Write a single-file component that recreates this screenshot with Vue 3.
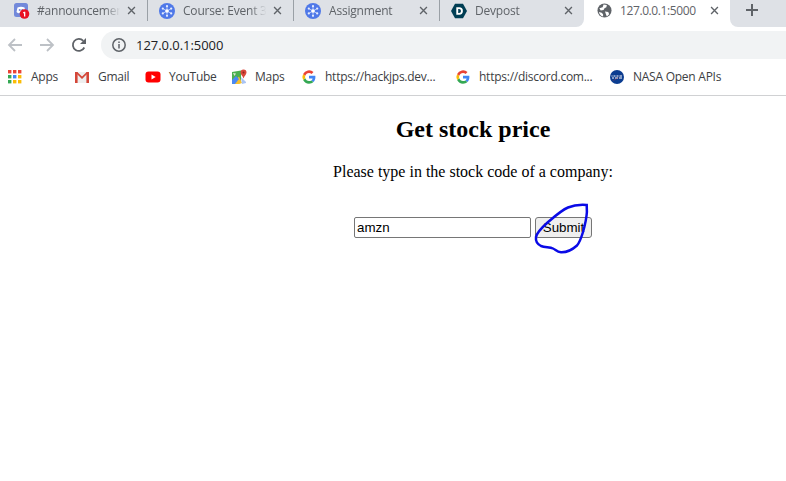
<script setup>
const tabs = [
  { title: '#announcemen', icon: 'discord' },
  { title: 'Course: Event 3', icon: 'hub' },
  { title: 'Assignment', icon: 'hub' },
  { title: 'Devpost', icon: 'devpost' },
]

const bookmarks = [
  { label: 'Apps', icon: 'apps', width: 27 },
  { label: 'Gmail', icon: 'gmail', width: 31 },
  { label: 'YouTube', icon: 'youtube', width: 46 },
  { label: 'Maps', icon: 'maps', width: 30 },
  { label: 'https://hackjps.dev...', icon: 'google', width: 114 },
  { label: 'https://discord.com...', icon: 'google', width: 114 },
  { label: 'NASA Open APIs', icon: 'nasa', width: 90 },
]

const spokes = [
  [8, 3.2], [12.2, 5.6], [12.2, 10.4], [8, 12.8], [3.8, 10.4], [3.8, 5.6],
]
</script>

<template>
  <div class="window">
    <div class="tabstrip">
      <div class="tabs">
        <div v-for="tab in tabs" :key="tab.title" class="tab">
          <svg v-if="tab.icon === 'discord'" class="favicon" viewBox="0 0 16 16">
            <rect x="0" y="0" width="14" height="14" rx="2.5" fill="#7289da" />
            <path d="M3.5 4.5Q7 2.8 10.500 4.500L11.500 9Q10 10.500 8.800 10.300L8.300 9.400Q7 9.800 5.700 9.400L5.200 10.300Q4 10.500 2.500 9Z" fill="#fff" />
            <circle cx="5.700" cy="7" r="1" fill="#7289da" />
            <circle cx="8.300" cy="7" r="1" fill="#7289da" />
            <circle cx="10.500" cy="11" r="4.800" fill="#e81123" />
            <path d="M10 8.800h1.300v4.600h-1.300v-3.300l-1 .4v-1Z" fill="#fff" />
          </svg>
          <svg v-else-if="tab.icon === 'hub'" class="favicon" viewBox="0 0 16 16">
            <circle cx="8" cy="8" r="8" fill="#4f78e8" />
            <line v-for="(s, i) in spokes" :key="i" x1="8" y1="8" :x2="s[0]" :y2="s[1]" stroke="#cfdcfb" stroke-width="0.8" />
            <circle v-for="(s, i) in spokes" :key="'n' + i" :cx="s[0]" :cy="s[1]" r="1.100" fill="#e6edfe" />
            <circle cx="8" cy="8" r="1.800" fill="#fff" />
          </svg>
          <svg v-else class="favicon" viewBox="0 0 16 16">
            <path d="M4 .8h8L16 8l-4 7.200H4L0 8Z" fill="#003e54" />
            <path d="M5.300 4.300h2.900a3.700 3.700 0 0 1 0 7.400H5.300Zm1.900 1.800v3.800h.9a1.900 1.900 0 0 0 0-3.800Z" fill="#fff" fill-rule="evenodd" />
          </svg>
          <span class="tab-title">{{ tab.title }}</span>
          <svg class="tab-close" viewBox="0 0 10 10">
            <path d="M1.200 1.200l7.600 7.600M8.800 1.200l-7.600 7.600" />
          </svg>
        </div>
      </div>
      <div class="tab active">
        <svg class="favicon globe" viewBox="0 0 16 16">
          <circle cx="8" cy="8" r="7.500" fill="#5f6368" />
          <path d="M2.500 5.500L6 4.500l1-3 3.500.5-.5 2.500L8 5.500 7 7.500l-3 .5ZM8.500 9l3.500.5 1 2.500-2.500 2.500-1-2.500ZM2 9.500l3 1 1.500 1.500v2.500Q3 13.500 2 9.500Z" fill="#fff" />
        </svg>
        <span class="tab-title plain">127.0.0.1:5000</span>
        <svg class="tab-close" viewBox="0 0 10 10">
          <path d="M1.200 1.200l7.600 7.600M8.800 1.200l-7.600 7.600" />
        </svg>
      </div>
      <div class="newtab">
        <svg class="plus" viewBox="0 0 12 12">
          <path d="M6 0v12M0 6h12" />
        </svg>
      </div>
    </div>

    <div class="toolbar">
      <svg class="nav" viewBox="0 0 16 16">
        <path class="off" d="M15 8H2M8 2L2 8l6 6" />
      </svg>
      <svg class="nav" viewBox="0 0 16 16">
        <path class="off" d="M1 8h13M8 2l6 6-6 6" />
      </svg>
      <svg class="nav" viewBox="0 0 16 16">
        <path class="on" d="M13.300 10.500A6 6 0 1 1 12.300 3.800" />
        <path class="on-fill" d="M15 1v6H9Z" />
      </svg>
      <div class="omnibox">
        <svg class="info" viewBox="0 0 14 14">
          <circle cx="7" cy="7" r="6.200" />
          <path d="M7 6v4.500M7 3.500v1.500" />
        </svg>
        <span class="url">127.0.0.1:5000</span>
      </div>
    </div>

    <div class="bookmarks">
      <div v-for="b in bookmarks" :key="b.label" class="bookmark">
        <svg v-if="b.icon === 'apps'" class="favicon" viewBox="0 0 16 16">
          <rect x="1" y="1" width="3.400" height="3.400" fill="#ea4335" />
          <rect x="6" y="1" width="3.400" height="3.400" fill="#ea4335" />
          <rect x="11" y="1" width="3.400" height="3.400" fill="#ea4335" />
          <rect x="1" y="6" width="3.400" height="3.400" fill="#34a853" />
          <rect x="6" y="6" width="3.400" height="3.400" fill="#4285f4" />
          <rect x="11" y="6" width="3.400" height="3.400" fill="#fbbc05" />
          <rect x="1" y="11" width="3.400" height="3.400" fill="#34a853" />
          <rect x="6" y="11" width="3.400" height="3.400" fill="#fbbc05" />
          <rect x="11" y="11" width="3.400" height="3.400" fill="#fbbc05" />
        </svg>
        <svg v-else-if="b.icon === 'gmail'" class="favicon" viewBox="0 0 16 16">
          <path d="M1 3h14v11H1Z" fill="#eeeeee" />
          <path d="M1 3h2.600v11H1ZM12.400 3H15v11h-2.600Z" fill="#d44638" />
          <path d="M1 3h2.200L8 7.400 12.800 3H15L8 10Z" fill="#d44638" />
        </svg>
        <svg v-else-if="b.icon === 'youtube'" class="favicon" viewBox="0 0 16 16">
          <rect x="0.500" y="2.500" width="15" height="11" rx="3" fill="#f00" />
          <path d="M6.500 5.500L10.700 8l-4.200 2.500Z" fill="#fff" />
        </svg>
        <svg v-else-if="b.icon === 'maps'" class="favicon" viewBox="0 0 16 16">
          <path d="M1 3l9-1.500V14l-9 1Z" fill="#4caf50" />
          <path d="M1 15L8 7.500 11 14l-3 1Z" fill="#f6c02f" />
          <path d="M1 11L5 7l3 3-4 5H1Z" fill="#4a89f3" />
          <path d="M2 4l3 .5L3.500 7Z" fill="#d9ead3" />
          <path d="M10 8l5 5v1l-4 1Z" fill="#a9c4f5" />
          <path d="M12.500 .5a3 3 0 0 1 3 3c0 2-2 3-3 6-1-3-3-4-3-6a3 3 0 0 1 3-3Z" fill="#d9483b" />
          <circle cx="12.500" cy="3.500" r="1" fill="#8f2a20" />
        </svg>
        <svg v-else-if="b.icon === 'google'" class="favicon" viewBox="0 0 16 16">
          <path d="M14.400 8.200c0-.5 0-1-.1-1.400H8v2.700h3.600a3.100 3.100 0 0 1-1.300 2l2.100 1.600c1.200-1.200 2-2.900 2-4.900Z" fill="#4285f4" />
          <path d="M8 14.700c1.800 0 3.300-.6 4.400-1.600l-2.100-1.600c-.6.400-1.400.6-2.300.6-1.800 0-3.200-1.200-3.700-2.800l-2.200 1.700A6.700 6.700 0 0 0 8 14.700Z" fill="#34a853" />
          <path d="M4.300 9.300a4 4 0 0 1 0-2.600L2.100 5a6.700 6.700 0 0 0 0 6Z" fill="#fbbc05" />
          <path d="M8 3.900c1 0 1.900.4 2.600 1l1.900-1.900A6.700 6.700 0 0 0 2.100 5l2.200 1.700C4.800 5.100 6.200 3.900 8 3.900Z" fill="#ea4335" />
        </svg>
        <svg v-else class="favicon" viewBox="0 0 16 16">
          <circle cx="8" cy="8" r="7" fill="#0b3d91" />
          <path d="M2.500 7h1M4.500 7h2M7.500 7h2M10.500 7h2.500M3 9h2M6 9h3M10 9h3" stroke="#fff" stroke-width="1.200" />
          <path d="M2.500 12.500Q9 10 15.500 2.500Q11 8 6 10.500Z" fill="#e03c31" />
        </svg>
        <span class="bookmark-label" :style="{ width: b.width + 'px' }">{{ b.label }}</span>
      </div>
    </div>

    <main class="page">
      <h1>Get stock price</h1>
      <p>Please type in the stock code of a company:</p>
      <form class="stock-form" @submit.prevent>
        <input class="stock-input" type="text" value="amzn" />
        <button class="stock-submit" type="submit">Submit</button>
      </form>
    </main>

    <svg class="scribble" viewBox="0 0 786 481">
      <path d="M586.700 205C580 204.500 574 205 568 207.500C561 210.500 554 217 547 223C542 227.500 537 232 536 237C535.500 241 537 244 541 246C545 247.500 550 247 553 248.500C556 250 557 252 561 252.300C566 252.500 572 250 577 245.500C580 242 581.500 237 583 232C585 225 586.500 218 586.900 212Z" />
    </svg>
  </div>
</template>

<style scoped>
.window {
  position: relative;
  width: 786px;
  height: 481px;
  overflow: hidden;
  background: #fff;
}

.tabstrip {
  display: flex;
  height: 31px;
  background: #fff;
  font-family: "Open Sans", sans-serif;
  font-size: 12px;
}

.tabs {
  display: flex;
  width: 584px;
  height: 27px;
  padding-left: 1px;
  box-sizing: border-box;
  background: #dee1e6;
  border-bottom-right-radius: 8px;
}

.tab {
  position: relative;
  display: flex;
  align-items: center;
  flex: none;
  box-sizing: border-box;
  width: 146px;
  height: 21px;
  padding: 0 11px 0 12px;
}

.tabs .tab:first-child {
  padding-left: 13px;
}

.tabs .tab:first-child .tab-title {
  margin-left: 7px;
}

.tabs .tab:nth-child(4) {
  width: 145px;
}

.tabs .tab:not(:last-child)::after {
  content: "";
  position: absolute;
  right: -1px;
  top: 0;
  width: 1px;
  height: 21px;
  background: #9aa0a6;
}

.tab.active {
  padding-left: 13px;
}

.favicon {
  flex: none;
  width: 16px;
  height: 16px;
}

.globe {
  width: 15px;
  height: 15px;
}

.tab-title {
  flex: 1;
  min-width: 0;
  margin-left: 8px;
  overflow: hidden;
  white-space: nowrap;
  color: #5f6368;
  letter-spacing: -0.2px;
  -webkit-mask-image: linear-gradient(to right, #000 78%, transparent 97%);
  mask-image: linear-gradient(to right, #000 78%, transparent 97%);
}

.tab-title.plain {
  letter-spacing: -0.4px;
  -webkit-mask-image: none;
  mask-image: none;
}

.tab-close {
  flex: none;
  width: 9px;
  height: 9px;
  margin-left: 4px;
  fill: none;
  stroke: #5f6368;
  stroke-width: 1.500;
}

.newtab {
  flex: 1;
  height: 27px;
  background: #dee1e6;
  border-bottom-left-radius: 8px;
}

.plus {
  display: block;
  width: 12px;
  height: 12px;
  margin: 4px 0 0 16px;
  fill: none;
  stroke: #5f6368;
  stroke-width: 2;
}

.toolbar {
  display: flex;
  align-items: center;
  gap: 16px;
  height: 28px;
  padding-left: 7px;
  margin-bottom: 3px;
}

.nav {
  flex: none;
  width: 16px;
  height: 16px;
  fill: none;
}

.off {
  stroke: #bdc1c6;
  stroke-width: 1.800;
}

.on {
  fill: none;
  stroke: #5f6368;
  stroke-width: 1.800;
}

.on-fill {
  fill: #5f6368;
}

.omnibox {
  display: flex;
  flex: 1;
  align-items: center;
  gap: 10px;
  height: 28px;
  margin-left: -2px;
  padding-left: 11px;
  background: #f1f3f4;
  border-radius: 14px 0 0 14px;
}

.info {
  flex: none;
  width: 14px;
  height: 14px;
  fill: none;
  stroke: #5f6368;
  stroke-width: 1.500;
}

.url {
  font-family: "Open Sans", sans-serif;
  font-size: 13px;
  letter-spacing: -0.05px;
  color: #202124;
}

.bookmarks {
  display: flex;
  align-items: center;
  gap: 16px;
  height: 34px;
  padding: 0 0 3px 7px;
  box-sizing: border-box;
  border-bottom: 1px solid #d0d1d3;
  font-family: "Open Sans", sans-serif;
  font-size: 12px;
  letter-spacing: -0.25px;
  color: #3c4043;
}

.bookmark {
  display: flex;
  align-items: center;
  gap: 8px;
}

.bookmark-label {
  position: relative;
  top: -1px;
  white-space: nowrap;
}

.page {
  width: 946px;
  text-align: center;
  font-family: "Liberation Serif", serif;
  font-size: 16px;
  color: #000;
}

h1 {
  margin: 20px 0;
  font-size: 24px;
  font-weight: bold;
  line-height: 27px;
}

p {
  margin: 0 0 36px;
  line-height: 18px;
}

.stock-form {
  display: flex;
  justify-content: center;
  gap: 4px;
}

.stock-input {
  box-sizing: border-box;
  width: 177px;
  height: 21px;
  padding: 1px 2px;
  border: 1px solid #767676;
  border-radius: 2px;
  font-family: "Liberation Sans", sans-serif;
  font-size: 13.333px;
  color: #000;
}

.stock-submit {
  box-sizing: border-box;
  width: 57px;
  height: 21px;
  padding: 0;
  background: #efefef;
  border: 1px solid #767676;
  border-radius: 3px;
  font-family: "Liberation Sans", sans-serif;
  font-size: 13.333px;
  color: #000;
}

.scribble {
  position: absolute;
  left: 0;
  top: 0;
  width: 786px;
  height: 481px;
  fill: none;
  stroke: #0a0ae6;
  stroke-width: 2.500;
  pointer-events: none;
}
</style>

<style>
html,
body {
  margin: 0;
  overflow: hidden;
}
</style>
